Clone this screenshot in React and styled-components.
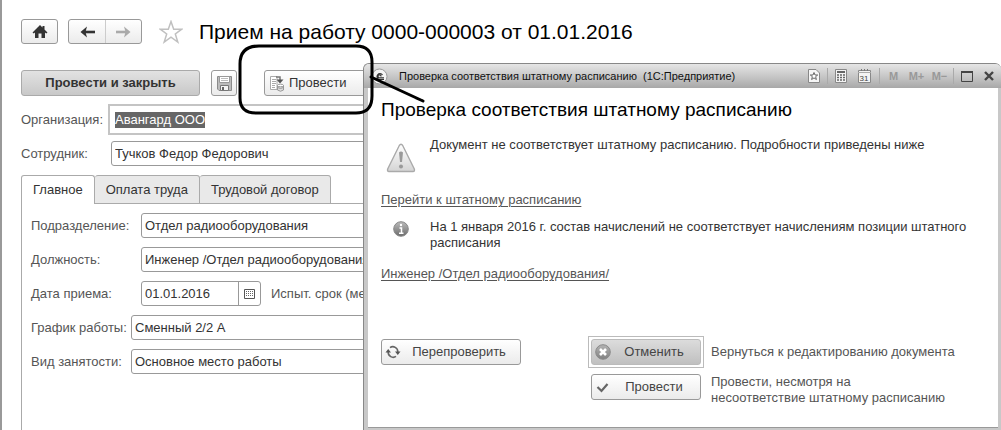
import React, { useEffect, useRef } from "react";
import styled, { createGlobalStyle, css } from "styled-components";

function App() {
  const organization = useRef(null);

  useEffect(() => {
    organization.current.focus();
    organization.current.select();
  }, []);

  return (
    <Page>
      <GlobalStyle />
      <Header>
        <HomeButton aria-label="Начальная страница">
          <HomeIcon />
        </HomeButton>
        <NavGroup>
          <NavButton aria-label="Назад">
            <ArrowIcon color="#333" />
          </NavButton>
          <NavButton aria-label="Вперед" $divided>
            <ArrowIcon color="#aaa" forward />
          </NavButton>
        </NavGroup>
        <StarButton aria-label="В избранное">
          <StarIcon />
        </StarButton>
        <Title>Прием на работу 0000-000003 от 01.01.2016</Title>
      </Header>

      <Toolbar>
        <MainButton>Провести и закрыть</MainButton>
        <SaveButton aria-label="Записать">
          <DiskIcon />
        </SaveButton>
        <PostButton>
          <PostIcon />
          Провести
        </PostButton>
      </Toolbar>

      <Form>
        <Row $tall>
          <Label htmlFor="organization" $width="87px">
            Организация:
          </Label>
          <FocusFrame>
            <PlainInput id="organization" ref={organization} defaultValue="Авангард ООО" />
          </FocusFrame>
        </Row>
        <Row>
          <Label htmlFor="employee" $width="90px">
            Сотрудник:
          </Label>
          <Input id="employee" defaultValue="Тучков Федор Федорович" />
        </Row>
      </Form>

      <Tabs role="tablist">
        <Tab role="tab" aria-selected="true" $active>
          Главное
        </Tab>
        <Tab role="tab" aria-selected="false">
          Оплата труда
        </Tab>
        <Tab role="tab" aria-selected="false">
          Трудовой договор
        </Tab>
        <TabsLine />
      </Tabs>
      <Panel role="tabpanel">
        <Row>
          <Label htmlFor="department" $width="110px">
            Подразделение:
          </Label>
          <Input id="department" defaultValue="Отдел радиооборудования" />
        </Row>
        <Row>
          <Label htmlFor="position" $width="110px">
            Должность:
          </Label>
          <Input id="position" defaultValue="Инженер /Отдел радиооборудования/" />
        </Row>
        <Row>
          <Label htmlFor="date" $width="110px">
            Дата приема:
          </Label>
          <DateField>
            <PlainInput id="date" defaultValue="01.01.2016" />
            <DateButton aria-label="Выбрать дату">
              <GridIcon />
            </DateButton>
          </DateField>
          <Note>Испыт. срок (мес.):</Note>
        </Row>
        <Row>
          <Label htmlFor="schedule" $width="100px">
            График работы:
          </Label>
          <Input id="schedule" defaultValue="Сменный 2/2 А" />
        </Row>
        <Row>
          <Label htmlFor="employment" $width="100px">
            Вид занятости:
          </Label>
          <Input id="employment" defaultValue="Основное место работы" />
        </Row>
      </Panel>

      <Dialog role="dialog" aria-labelledby="dialog-title">
        <TitleBar>
          <LogoIcon />
          <WindowTitle>Проверка соответствия штатному расписанию &nbsp;(1С:Предприятие)</WindowTitle>
          <BarButton aria-label="Избранное">
            <BarStarIcon />
          </BarButton>
          <Separator />
          <BarButton aria-label="Калькулятор">
            <CalculatorIcon />
          </BarButton>
          <BarButton aria-label="Календарь" $wide>
            <CalendarIcon />
          </BarButton>
          <Separator />
          <MemoryButton>M</MemoryButton>
          <MemoryButton>M+</MemoryButton>
          <MemoryButton>M−</MemoryButton>
          <Separator />
          <BarButton aria-label="Развернуть">
            <MaximizeIcon />
          </BarButton>
          <BarButton aria-label="Закрыть">
            <CloseIcon />
          </BarButton>
        </TitleBar>
        <DialogBody>
          <DialogTitle id="dialog-title">Проверка соответствия штатному расписанию</DialogTitle>
          <Message>
            <IconCell $top="6px">
              <WarningIcon />
            </IconCell>
            <Text>Документ не соответствует штатному расписанию. Подробности приведены ниже</Text>
          </Message>
          <Link href="#staff">Перейти к штатному расписанию</Link>
          <Message $compact>
            <IconCell $top="2px">
              <InfoIcon />
            </IconCell>
            <Text>
              На 1 января 2016 г. состав начислений не соответствует начислениям позиции штатного
              расписания
            </Text>
          </Message>
          <Link href="#position-card">Инженер /Отдел радиооборудования/</Link>
          <Actions>
            <ActionCell>
              <ActionButton $width="140px">
                <RefreshIcon />
                <span>Перепроверить</span>
              </ActionButton>
            </ActionCell>
            <Choices>
              <DefaultFrame>
                <ActionButton $width="110px" $dark>
                  <CancelIcon />
                  <span>Отменить</span>
                </ActionButton>
              </DefaultFrame>
              <Hint>Вернуться к редактированию документа</Hint>
              <ChoiceCell>
                <ActionButton $width="110px">
                  <CheckIcon />
                  <span>Провести</span>
                </ActionButton>
              </ChoiceCell>
              <Hint>
                Провести, несмотря на
                <br />
                несоответствие штатному расписанию
              </Hint>
            </Choices>
          </Actions>
        </DialogBody>
      </Dialog>

      <Callout viewBox="0 0 200 80" aria-hidden="true">
        <path d="M21 4H118Q134 4 134 20V54Q134 71 118 71H18Q2 71 2 56V22Q2 4 21 4Z" />
        <path d="M133 35L185 59" />
      </Callout>
    </Page>
  );
}

export default App;

function HomeIcon() {
  return (
    <svg width="16" height="14" viewBox="0 0 16 14">
      <path
        d="M8 0L0.500 7.500L1.800 8.600L3 7.500V13H6.500V8.500H9.500V13H13V7.500L14.200 8.600L15.500 7.500L12.500 4.500V1H10.500V2.500Z"
        fill="#333"
      />
    </svg>
  );
}

function ArrowIcon({ color, forward }) {
  return (
    <svg width="15" height="12" viewBox="0 0 15 12">
      <path
        d={forward ? "M0 6H10" : "M15 6H5"}
        fill="none"
        stroke={color}
        strokeWidth="2.600"
      />
      <path d={forward ? "M8 0.500L14.500 6L8 11.500L9.500 6Z" : "M7 0.500L0.500 6L7 11.500L5.500 6Z"} fill={color} />
    </svg>
  );
}

function StarIcon() {
  return (
    <svg width="24" height="24" viewBox="0 0 24 24">
      <path
        d="M12 1.500L14.700 9.200H22.700L16.300 14L18.800 22L12 17.200L5.200 22L7.700 14L1.300 9.200H9.300Z"
        fill="#fff"
        stroke="#c0c0c0"
        strokeWidth="1.500"
      />
    </svg>
  );
}

function DiskIcon() {
  return (
    <svg width="15" height="15" viewBox="0 0 15 15">
      <path d="M0.500 0.500H14.500V14.500H2L0.500 13Z" fill="#bbb" stroke="#8a8a8a" />
      <path d="M2.500 0.500H12.500V6.500H2.500Z" fill="#fff" stroke="#999" />
      <path d="M4 2.500H11M4 4.500H11" stroke="#bbb" />
      <path d="M3.500 9.500H11.500V14.500H3.500Z" fill="#f4f4f4" stroke="#777" />
      <path d="M5 11H7V14H5Z" fill="#666" />
    </svg>
  );
}

function PostIcon() {
  return (
    <svg width="16" height="17" viewBox="0 0 16 17">
      <path d="M1.500 1.500H8V14.500H1.500Z" fill="#fff" stroke="#aaa" />
      <path d="M3 4.500H7M3 6.500H7M3 8.500H7M3 10.500H6M3 12.500H6" stroke="#aaa" />
      <path d="M7 2H11V5" fill="none" stroke="#777" strokeWidth="1.500" />
      <path d="M7.500 4.500H14.500L11 8.500Z" fill="#555" />
      <path d="M8.500 10.500V15Q11.500 17.500 14.500 15V10.500Z" fill="#ddd" stroke="#999" />
      <ellipse cx="11.500" cy="10.500" rx="3" ry="1.300" fill="#fff" stroke="#999" />
      <path d="M8.500 12.500Q11.500 14.500 14.500 12.500" fill="none" stroke="#999" />
    </svg>
  );
}

function GridIcon() {
  return (
    <svg width="11" height="10" viewBox="0 0 11 10">
      <path d="M0.500 0.500H10.500V9.500H0.500Z" fill="#fff" stroke="#555" />
      <path d="M2 2.500H9M2 4.500H9M2 6.500H9" stroke="#666" strokeDasharray="1 1" />
    </svg>
  );
}

function LogoIcon() {
  return (
    <svg width="17" height="17" viewBox="0 0 17 17">
      <circle cx="8.500" cy="8.500" r="7.500" fill="#f4f4f4" stroke="#999" />
      <path
        d="M11.500 7A3 3 0 1 0 8 11.500H13M10 8.500A1.500 1.500 0 1 0 8.500 9.800H13"
        fill="none"
        stroke="#333"
        strokeWidth="1.200"
      />
    </svg>
  );
}

function BarStarIcon() {
  return (
    <svg width="12" height="14" viewBox="0 0 12 14">
      <path d="M0.500 0.500H8L11.500 4V13.500H0.500Z" fill="#f6f6f6" stroke="#888" />
      <path
        d="M6 3.500L7 6H9.700L7.600 7.700L8.400 10.500L6 8.900L3.600 10.500L4.400 7.700L2.300 6H5Z"
        fill="#fff"
        stroke="#666"
      />
    </svg>
  );
}

function CalculatorIcon() {
  return (
    <svg width="12" height="14" viewBox="0 0 12 14">
      <path d="M0.500 0.500H11.500V13.500H0.500Z" fill="#f4f4f4" stroke="#888" />
      <path d="M2 3H10" stroke="#666" strokeWidth="2" />
      <path d="M2 6H10M2 8.500H10M2 11H10" stroke="#666" strokeWidth="1.500" strokeDasharray="2 1" />
    </svg>
  );
}

function CalendarIcon() {
  return (
    <svg width="13" height="14" viewBox="0 0 13 14">
      <path d="M0.500 1.500H12.500V13.500H0.500Z" fill="#f4f4f4" stroke="#888" />
      <path d="M0 3.500H13" stroke="#aaa" />
      <path d="M3.500 0V2M6.500 0V2M9.500 0V2" stroke="#777" />
      <text x="6" y="12" textAnchor="middle" fontSize="8" fill="#444">
        31
      </text>
    </svg>
  );
}

function MaximizeIcon() {
  return (
    <svg width="12" height="11" viewBox="0 0 12 11">
      <path d="M0.500 0.500H11.500V10.500H0.500Z" fill="none" stroke="#444" />
      <path d="M0 1H12" stroke="#444" strokeWidth="2" />
    </svg>
  );
}

function CloseIcon() {
  return (
    <svg width="10" height="10" viewBox="0 0 10 10">
      <path d="M1 1L9 9M9 1L1 9" stroke="#444" strokeWidth="2.400" />
    </svg>
  );
}

function WarningIcon() {
  return (
    <svg width="30" height="30" viewBox="0 0 30 30">
      <defs>
        <linearGradient id="warning" x2="0" y2="1">
          <stop offset="0" stopColor="#fff" />
          <stop offset="1" stopColor="#d4d4d4" />
        </linearGradient>
      </defs>
      <path
        d="M13.300 2.500Q15 0 16.700 2.500L28.300 26Q29 28.500 27 28.500H3Q1 28.500 1.700 26Z"
        fill="url(#warning)"
        stroke="#aaa"
        strokeWidth="1.400"
      />
      <path d="M13 9.500Q15 7.500 17 9.500L16 19H14Z" fill="#999" />
      <circle cx="15" cy="23.500" r="2" fill="#999" />
    </svg>
  );
}

function InfoIcon() {
  return (
    <svg width="16" height="16" viewBox="0 0 16 16">
      <defs>
        <linearGradient id="info" x2="0" y2="1">
          <stop offset="0" stopColor="#bbb" />
          <stop offset="1" stopColor="#6c6c6c" />
        </linearGradient>
      </defs>
      <circle cx="8" cy="8" r="7.300" fill="url(#info)" stroke="#888" />
      <path d="M6.500 7H8.500V12M6 12.300H10.500" fill="none" stroke="#fff" strokeWidth="1.500" />
      <circle cx="8" cy="4" r="1.200" fill="#fff" />
    </svg>
  );
}

function RefreshIcon() {
  return (
    <svg width="16" height="16" viewBox="0 0 16 16">
      <path
        d="M5 3.600A5 5 0 0 1 12.800 8M11 12.400A5 5 0 0 1 3.200 8"
        fill="none"
        stroke="#666"
        strokeWidth="1.600"
      />
      <path d="M10 7.500H15.500L12.800 11ZM0.500 8.500H6L3.200 5Z" fill="#555" />
    </svg>
  );
}

function CancelIcon() {
  return (
    <svg width="16" height="16" viewBox="0 0 16 16">
      <defs>
        <linearGradient id="cancel" x2="0" y2="1">
          <stop offset="0" stopColor="#b4b4b4" />
          <stop offset="1" stopColor="#808080" />
        </linearGradient>
      </defs>
      <circle cx="8" cy="8" r="7.300" fill="url(#cancel)" stroke="#8a8a8a" />
      <path d="M5 5L11 11M11 5L5 11" stroke="#fff" strokeWidth="2.600" />
    </svg>
  );
}

function CheckIcon() {
  return (
    <svg width="16" height="16" viewBox="0 0 16 16">
      <path d="M2.500 8L6.500 12L12.500 5" fill="none" stroke="#666" strokeWidth="2.200" />
    </svg>
  );
}

const GlobalStyle = createGlobalStyle`
  * {
    box-sizing: border-box;
  }

  body {
    margin: 0;
    background: #fff;
    color: #333;
    font: 13px/16px "Liberation Sans", Arial, sans-serif;
  }

  button,
  input {
    margin: 0;
    font: inherit;
    color: inherit;
  }

  svg {
    flex-shrink: 0;
  }
`;

const Page = styled.main`
  position: relative;
  display: flex;
  flex-direction: column;
  min-height: 100vh;
  padding-left: 19px;
  border-left: 2px solid #999;
  overflow: hidden;
`;

const Header = styled.header`
  display: flex;
  align-items: center;
  padding-top: 19px;
`;

const raised = css`
  border: 1px solid #999;
  border-radius: 3px;
  background: linear-gradient(#fff, #ebebeb);
`;

const HomeButton = styled.button`
  ${raised}
  display: flex;
  align-items: center;
  justify-content: center;
  width: 37px;
  height: 25px;
  margin-right: 10px;
  padding: 0;
`;

const NavGroup = styled.div`
  ${raised}
  display: flex;
  height: 25px;
`;

const NavButton = styled.button`
  display: flex;
  align-items: center;
  justify-content: center;
  width: 36px;
  padding: 0;
  border: 0;
  border-left: ${({ $divided }) => ($divided ? "1px solid #ccc" : "0")};
  background: none;
`;

const StarButton = styled.button`
  display: flex;
  margin: 0 16px 0 17px;
  padding: 0;
  border: 0;
  background: none;
`;

const Title = styled.h1`
  margin: 0;
  color: #000;
  font-size: 21px;
  font-weight: normal;
  line-height: 25px;
`;

const Toolbar = styled.div`
  display: flex;
  margin-top: 26px;
`;

const MainButton = styled.button`
  width: 179px;
  height: 26px;
  padding: 0;
  border: 1px solid #aaa;
  border-radius: 3px;
  background: linear-gradient(#e2e2e2, #c8c8c8);
  font-weight: bold;
`;

const SaveButton = styled.button`
  ${raised}
  display: flex;
  align-items: center;
  justify-content: center;
  width: 26px;
  height: 26px;
  margin-left: 11px;
  padding: 0;
`;

const PostButton = styled.button`
  ${raised}
  display: flex;
  align-items: center;
  gap: 4px;
  width: 110px;
  height: 26px;
  margin-left: 27px;
  padding: 0 4px;
`;

const Form = styled.div`
  display: flex;
  flex-direction: column;
  gap: 6px;
  margin-top: 8px;
`;

const Row = styled.div`
  display: flex;
  align-items: center;
  height: ${({ $tall }) => ($tall ? "31px" : "25px")};
`;

const Label = styled.label`
  flex-shrink: 0;
  width: ${({ $width }) => $width};
  color: #555;
`;

const Note = styled.span`
  margin-left: 10px;
  color: #555;
`;

const Input = styled.input`
  flex: 1;
  min-width: 0;
  height: 25px;
  padding: 0 3px;
  border: 1px solid #999;
  border-radius: 3px;
  background: #fff;
`;

const PlainInput = styled.input`
  flex: 1;
  min-width: 0;
  padding: 0 3px;
  border: 0;
  outline: 0;
  background: none;

  &::selection {
    background: rgba(100, 100, 100, 0.99);
    color: #fff;
  }
`;

const FocusFrame = styled.div`
  display: flex;
  flex: 1;
  height: 31px;
  padding: 0 2px;
  border: 2px solid #c4c4c4;
`;

const DateField = styled.div`
  display: flex;
  width: 120px;
  height: 25px;
  border: 1px solid #999;
  border-radius: 3px;
`;

const DateButton = styled.button`
  display: flex;
  align-items: center;
  justify-content: center;
  width: 22px;
  padding: 0;
  border: 0;
  border-left: 1px solid #999;
  background: none;
`;

const Tabs = styled.div`
  display: flex;
  margin-top: 9px;
`;

const Tab = styled.button`
  height: 29px;
  padding: 0 11px;
  border: 1px solid #aaa;
  border-left-width: ${({ $active }) => ($active ? "1px" : "0")};
  border-bottom-width: ${({ $active }) => ($active ? "0" : "1px")};
  border-radius: 3px 3px 0 0;
  background: ${({ $active }) => ($active ? "#fff" : "#e9e9e9")};
`;

const TabsLine = styled.div`
  flex: 1;
  border-bottom: 1px solid #aaa;
`;

const Panel = styled.section`
  display: flex;
  flex: 1;
  flex-direction: column;
  gap: 9px;
  padding: 9px 0 0 9px;
  border-left: 1px solid #aaa;
`;

const Dialog = styled.section`
  position: absolute;
  top: 63px;
  right: 0;
  left: 361px;
  border: 1px solid #888;
  border-width: 1px 0 0 1px;
  border-radius: 6px 6px 0 0;
  background: #c8c8c8;
  overflow: hidden;
`;

const TitleBar = styled.header`
  display: flex;
  align-items: center;
  height: 24px;
  padding: 0 1px 0 7px;
  background: linear-gradient(#e6e6e6, #c8c8c8 50%, #a8a8a8);
`;

const WindowTitle = styled.span`
  flex: 1;
  margin-left: 11px;
  color: #111;
  font-size: 11px;
  white-space: nowrap;
`;

const BarButton = styled.button`
  display: flex;
  align-items: center;
  justify-content: center;
  width: ${({ $wide }) => ($wide ? "25px" : "22px")};
  height: 22px;
  padding: 0;
  border: 0;
  background: none;
`;

const MemoryButton = styled.button`
  width: 23px;
  padding: 0;
  border: 0;
  background: none;
  color: #999;
  font-size: 11px;
  font-weight: bold;
`;

const Separator = styled.span`
  width: 1px;
  height: 16px;
  margin: 0 2px;
  background: #aaa;
`;

const DialogBody = styled.div`
  margin: 0 3px 2px 4px;
  padding: 10px 14px 21px 13px;
  border-bottom: 1px solid #999;
  background: #fff;
`;

const DialogTitle = styled.h2`
  margin: 0;
  color: #000;
  font-size: 19px;
  font-weight: normal;
  line-height: 24px;
`;

const Message = styled.div`
  display: flex;
  margin: ${({ $compact }) => ($compact ? "11px 0 15px" : "15px 0 19px")};
`;

const IconCell = styled.div`
  display: flex;
  flex-shrink: 0;
  justify-content: center;
  width: 40px;
  margin-right: 9px;
  padding-top: ${({ $top }) => $top};
`;

const Text = styled.p`
  margin: 0;
`;

const Link = styled.a`
  display: table;
  color: #555;
  text-underline-offset: 2px;
`;

const Actions = styled.div`
  display: flex;
  align-items: flex-start;
  gap: 67px;
  margin-top: 54px;
`;

const ActionCell = styled.div`
  padding-top: 3px;
`;

const ActionButton = styled.button`
  ${raised}
  display: flex;
  align-items: center;
  width: ${({ $width }) => $width};
  height: 26px;
  padding: 0 3px;
  color: #444;

  ${({ $dark }) =>
    $dark &&
    css`
      border-color: #bbb;
      background: linear-gradient(#dcdcdc, #c0c0c0);
    `}

  span {
    flex: 1;
  }
`;

const Choices = styled.div`
  display: grid;
  grid-template-columns: 116px 1fr;
  gap: 6px 7px;
  align-items: center;
`;

const DefaultFrame = styled.div`
  padding: 2px;
  border: 1px solid #bbb;
`;

const ChoiceCell = styled.div`
  align-self: start;
  padding: 0 3px;
`;

const Hint = styled.p`
  margin: 0;
  color: #555;
`;

const Callout = styled.svg`
  position: absolute;
  top: 42px;
  left: 236px;
  width: 200px;
  height: 80px;
  pointer-events: none;

  path {
    fill: none;
    stroke: #000;
    stroke-width: 3;
    stroke-linecap: round;
  }
`;
